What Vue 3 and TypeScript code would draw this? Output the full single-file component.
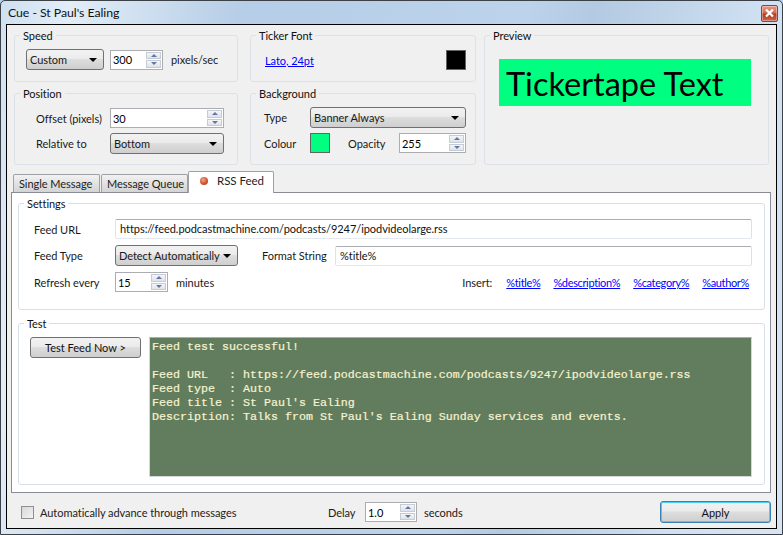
<template>
  <div class="window">
    <header class="titlebar">
      <span class="titlebar__text">Cue - St Paul's Ealing</span>
      <button class="close" aria-label="Close">
        <svg width="9" height="8" viewBox="0 0 9 8">
          <path d="M1 0.5 L8 7.5 M8 0.5 L1 7.5" stroke="#fff" stroke-width="2.2" />
        </svg>
      </button>
    </header>

    <main class="client">
      <section class="top">
        <div class="group speed">
          <div class="legend">Speed</div>
          <div class="speed__row">
            <div class="select select--speed"><span>Custom</span><i class="arrow" /></div>
            <div class="spin spin--speed">
              <span class="spin__value">300</span>
              <div class="spin__btns"><i class="up" /><i class="down" /></div>
            </div>
            <span>pixels/sec</span>
          </div>
        </div>

        <div class="group ticker">
          <div class="legend">Ticker Font</div>
          <div class="ticker__row">
            <a class="link">Lato, 24pt</a>
            <div class="swatch swatch--black" />
          </div>
        </div>

        <div class="group preview">
          <div class="legend">Preview</div>
          <div class="preview__banner">Tickertape Text</div>
        </div>

        <div class="group position">
          <div class="legend">Position</div>
          <div class="position__grid">
            <span class="position__label">Offset (pixels)</span>
            <div class="spin">
              <span class="spin__value">30</span>
              <div class="spin__btns"><i class="up" /><i class="down" /></div>
            </div>
            <span class="position__label">Relative to</span>
            <div class="select"><span>Bottom</span><i class="arrow" /></div>
          </div>
        </div>

        <div class="group background">
          <div class="legend">Background</div>
          <div class="background__grid">
            <span>Type</span>
            <div class="select background__type"><span>Banner Always</span><i class="arrow" /></div>
            <span>Colour</span>
            <div class="swatch swatch--green" />
            <span class="background__opacity">Opacity</span>
            <div class="spin">
              <span class="spin__value">255</span>
              <div class="spin__btns"><i class="up" /><i class="down" /></div>
            </div>
          </div>
        </div>
      </section>

      <nav class="tabs">
        <div class="tab">Single Message</div>
        <div class="tab">Message Queue</div>
        <div class="tab tab--active"><i class="dot" />RSS Feed</div>
      </nav>

      <section class="panel">
        <div class="group settings">
          <div class="legend legend--white">Settings</div>
          <div class="settings__grid">
            <span>Feed URL</span>
            <div class="textbox settings__wide">https://feed.podcastmachine.com/podcasts/9247/ipodvideolarge.rss</div>
            <span>Feed Type</span>
            <div class="select settings__type"><span>Detect Automatically</span><i class="arrow" /></div>
            <span class="settings__format-label">Format String</span>
            <div class="textbox">%title%</div>
          </div>
          <div class="settings__refresh">
            <span class="settings__refresh-label">Refresh every</span>
            <div class="spin spin--small">
              <span class="spin__value">15</span>
              <div class="spin__btns"><i class="up" /><i class="down" /></div>
            </div>
            <span class="settings__minutes">minutes</span>
            <div class="insert">
              <span class="insert__label">Insert:</span>
              <a v-for="tag in tags" :key="tag" class="link insert__link">{{ tag }}</a>
            </div>
          </div>
        </div>

        <div class="group test">
          <div class="legend legend--white">Test</div>
          <div class="test__row">
            <button class="button test__button">Test Feed Now &gt;</button>
            <pre class="console">{{ output }}</pre>
          </div>
        </div>
      </section>

      <footer class="bottom">
        <label class="check"><i class="check__box" />Automatically advance through messages</label>
        <div class="delay">
          <span class="delay__label">Delay</span>
          <div class="spin spin--delay">
            <span class="spin__value">1.0</span>
            <div class="spin__btns"><i class="up" /><i class="down" /></div>
          </div>
          <span>seconds</span>
        </div>
        <button class="button button--default">Apply</button>
      </footer>
    </main>
  </div>
</template>

<script setup lang="ts">
const tags: string[] = ["%title%", "%description%", "%category%", "%author%"];

const output = `Feed test successful!

Feed URL   : https://feed.podcastmachine.com/podcasts/9247/ipodvideolarge.rss
Feed type  : Auto
Feed title : St Paul's Ealing
Description: Talks from St Paul's Ealing Sunday services and events.`;
</script>

<style>
html,
body {
  margin: 0;
  background: #b9d1ea;
}
</style>

<style scoped>
.window {
  box-sizing: border-box;
  width: 783px;
  height: 535px;
  display: flex;
  flex-direction: column;
  padding: 0 5px 5px;
  border: 1px solid #3c4148;
  border-radius: 5px 5px 0 0;
  background: linear-gradient(100deg, #cfe0f1 0%, #e2edf7 8%, #b5cde6 28%, #bcd3eb 60%, #b3cae2 68%, #d0e1f2 88%, #d7e5f3 100%);
  font-family: Lato, "Liberation Sans", Arial, sans-serif;
  font-size: 11px;
  letter-spacing: -0.05px;
  color: #1a1a1a;
}

.titlebar {
  flex: none;
  height: 23px;
  display: flex;
  align-items: center;
  justify-content: space-between;
  padding: 0 0 0 2px;
}

.titlebar__text {
  font-size: 12.3px;
  color: #111;
}

.close {
  width: 17px;
  height: 17px;
  margin: 1px -1px 0 0;
  padding: 0;
  display: flex;
  align-items: center;
  justify-content: center;
  border: 1px solid #7d4a44;
  border-radius: 2px;
  background: linear-gradient(#e89a84, #d4674d 48%, #b23a1f 52%, #c9664a);
  box-shadow: inset 0 0 0 1px rgba(255, 255, 255, 0.35);
}

.client {
  flex: 1;
  min-height: 0;
  display: flex;
  flex-direction: column;
  border: 1px solid #000;
  background: #f0f0f0;
}

.top {
  display: grid;
  grid-template-columns: 224px 226px 281px;
  grid-template-rows: 47px 72px;
  column-gap: 12px;
  row-gap: 11px;
  margin: 10px 0 0 7px;
}

.top .ticker {
  grid-column: 2;
  grid-row: 1;
}

.top .preview {
  grid-column: 3;
  grid-row: 1 / span 2;
  margin-left: -4px;
}

.group {
  box-sizing: border-box;
  border: 1px solid #dce1e7;
  border-radius: 3px;
}

.legend {
  width: fit-content;
  margin: -7px 0 0 5px;
  padding: 0 3px;
  line-height: 13px;
  background: #f0f0f0;
  color: #111;
}

.legend--white {
  background: #fff;
}

.speed__row {
  display: flex;
  align-items: center;
  margin: 7px 0 0 11px;
}

.select {
  box-sizing: border-box;
  height: 21px;
  display: flex;
  align-items: center;
  justify-content: space-between;
  padding: 0 6px 0 3px;
  border: 1px solid #707070;
  border-radius: 3px;
  background: linear-gradient(#f2f2f2, #ebebeb 45%, #dddddd 50%, #cfcfcf);
  white-space: nowrap;
}

.select--speed {
  width: 78px;
  margin-right: 6px;
}

.arrow {
  width: 0;
  height: 0;
  border-left: 4px solid transparent;
  border-right: 4px solid transparent;
  border-top: 4px solid #000;
}

.spin {
  box-sizing: border-box;
  height: 20px;
  display: flex;
  align-items: center;
  justify-content: space-between;
  padding: 0 1px 0 1px;
  border: 1px solid #abadb3;
  background: #fff;
  color: #000;
}

.spin--speed {
  width: 53px;
  margin-right: 8px;
}

.spin--small {
  width: 53px;
}

.spin--delay {
  width: 52px;
  margin-right: 7px;
}

.spin__value {
  padding-left: 1px;
}

.spin__btns {
  width: 15px;
  height: 16px;
  display: flex;
  flex-direction: column;
  gap: 1px;
}

.up,
.down {
  flex: 1;
  display: flex;
  align-items: center;
  justify-content: center;
  border: 1px solid #c6ccd4;
  background: linear-gradient(#f4f5f7, #dfe3e9);
}

.up::after,
.down::after {
  content: "";
  border-left: 3.5px solid transparent;
  border-right: 3.5px solid transparent;
}

.up::after {
  border-bottom: 3px solid #6475a8;
}

.down::after {
  border-top: 3px solid #6475a8;
}

.ticker__row {
  display: flex;
  align-items: center;
  justify-content: space-between;
  margin: 8px 9px 0 14px;
}

.link {
  color: #0000ff;
  text-decoration: underline;
}

.swatch {
  box-sizing: border-box;
  width: 20px;
  height: 20px;
  border: 1px solid #646464;
}

.swatch--black {
  background: #000;
}

.swatch--green {
  background: #00ff80;
}

.preview__banner {
  box-sizing: border-box;
  height: 47px;
  margin: 17px 17px 0 14px;
  padding: 3px 0 0 7px;
  background: #00ff80;
  color: #000;
  font-family: Lato, sans-serif;
  font-size: 32.5px;
  letter-spacing: 0;
  line-height: 44px;
}

.position__grid {
  display: grid;
  grid-template-columns: 95px 114px;
  grid-template-rows: 20px 21px;
  row-gap: 5px;
  align-items: center;
  margin: 8px 0 0 0;
}

.position__label {
  padding-left: 21px;
}

.background__grid {
  display: grid;
  grid-template-columns: 46px 20px 1fr 67px;
  grid-template-rows: 21px 20px;
  row-gap: 5px;
  align-items: center;
  margin: 7px 9px 0 13px;
}

.background__type {
  grid-column: 2 / span 3;
}

.background__opacity {
  padding-left: 18px;
}

.tabs {
  display: flex;
  align-items: flex-end;
  height: 21px;
  margin: 6px 0 0 6px;
  position: relative;
  z-index: 1;
}

.tab {
  box-sizing: border-box;
  width: 87px;
  height: 18px;
  margin-right: 1px;
  padding-left: 5px;
  border: 1px solid #9da0a5;
  border-bottom: none;
  border-radius: 2px 2px 0 0;
  background: linear-gradient(#f2f2f2, #e2e2e2 50%, #d4d4d4);
  line-height: 17px;
  color: #222;
  white-space: nowrap;
}

.tab--active {
  width: 86px;
  height: 22px;
  margin: 0 0 -1px -1px;
  padding-left: 11px;
  padding-bottom: 3px;
  display: flex;
  align-items: center;
  gap: 9px;
  background: #fff;
  font-size: 11.5px;
  line-height: 18px;
}

.dot {
  width: 8px;
  height: 8px;
  border-radius: 50%;
  background: radial-gradient(circle at 40% 35%, #f2a68c, #d2552f 55%, #8f3a22);
}

.panel {
  box-sizing: border-box;
  height: 301px;
  margin: 0 5px 0 4px;
  padding: 10px 5px 0 6px;
  border: 1px solid #898c95;
  background: #fff;
}

.panel .group {
  border-color: #d9dfe6;
}

.settings {
  height: 107px;
}

.settings__grid {
  display: grid;
  grid-template-columns: 81px 123px 97px 1fr;
  grid-template-rows: 20px 21px;
  row-gap: 6px;
  align-items: center;
  margin: 9px 12px 0 15px;
}

.settings__wide {
  grid-column: 2 / span 3;
}

.settings__format-label {
  padding-left: 24px;
}

.textbox {
  box-sizing: border-box;
  height: 20px;
  padding: 0 4px;
  border: 1px solid #abadb3;
  border-bottom-color: #e3e9ef;
  border-left-color: #e2e3ea;
  border-right-color: #dbdfe6;
  border-radius: 2px;
  line-height: 18px;
  color: #111;
  background: #fff;
}

.settings__refresh {
  display: flex;
  align-items: center;
  margin: 6px 15px 0 15px;
}

.settings__refresh-label {
  width: 81px;
}

.settings__minutes {
  margin-left: 8px;
}

.insert {
  margin-left: auto;
  display: flex;
  gap: 13px;
}

.insert__label {
  margin-right: 1px;
}

.insert__link {
  letter-spacing: -0.35px;
}

.test {
  height: 162px;
  margin-top: 13px;
}

.test__row {
  display: flex;
  gap: 8px;
  margin: 7px 12px 0 11px;
}

.button {
  box-sizing: border-box;
  height: 21px;
  padding: 0;
  border: 1px solid #707070;
  border-radius: 3px;
  background: linear-gradient(#f2f2f2, #ebebeb 45%, #dddddd 50%, #cfcfcf);
  font: inherit;
  color: #111;
}

.test__button {
  flex: none;
  width: 111px;
}

.button--default {
  width: 111px;
  height: 22px;
  border-color: #3c7fb1;
  box-shadow: inset 0 0 0 1px #48d0f0;
}

.console {
  flex: 1;
  box-sizing: border-box;
  height: 140px;
  margin: 0;
  padding: 2px;
  border: 1px solid #d4d8de;
  border-top-color: #abadb3;
  background: #627d5e;
  color: #f7f3d0;
  font-family: "Liberation Mono", "Courier New", monospace;
  font-size: 11.67px;
  letter-spacing: 0;
  line-height: 14px;
  -webkit-text-stroke: 0.2px #f7f3d0;
}

.bottom {
  display: flex;
  align-items: center;
  margin: 8px 5px 0 14px;
}

.check {
  width: 307px;
  display: flex;
  align-items: center;
  gap: 6px;
  color: #222;
}

.check__box {
  box-sizing: border-box;
  width: 13px;
  height: 13px;
  border: 1px solid #8e8f8f;
  background: linear-gradient(135deg, #d8d8d8, #f2f2f2);
}

.delay {
  display: flex;
  align-items: center;
  margin-right: auto;
}

.delay__label {
  width: 37px;
}
</style>
